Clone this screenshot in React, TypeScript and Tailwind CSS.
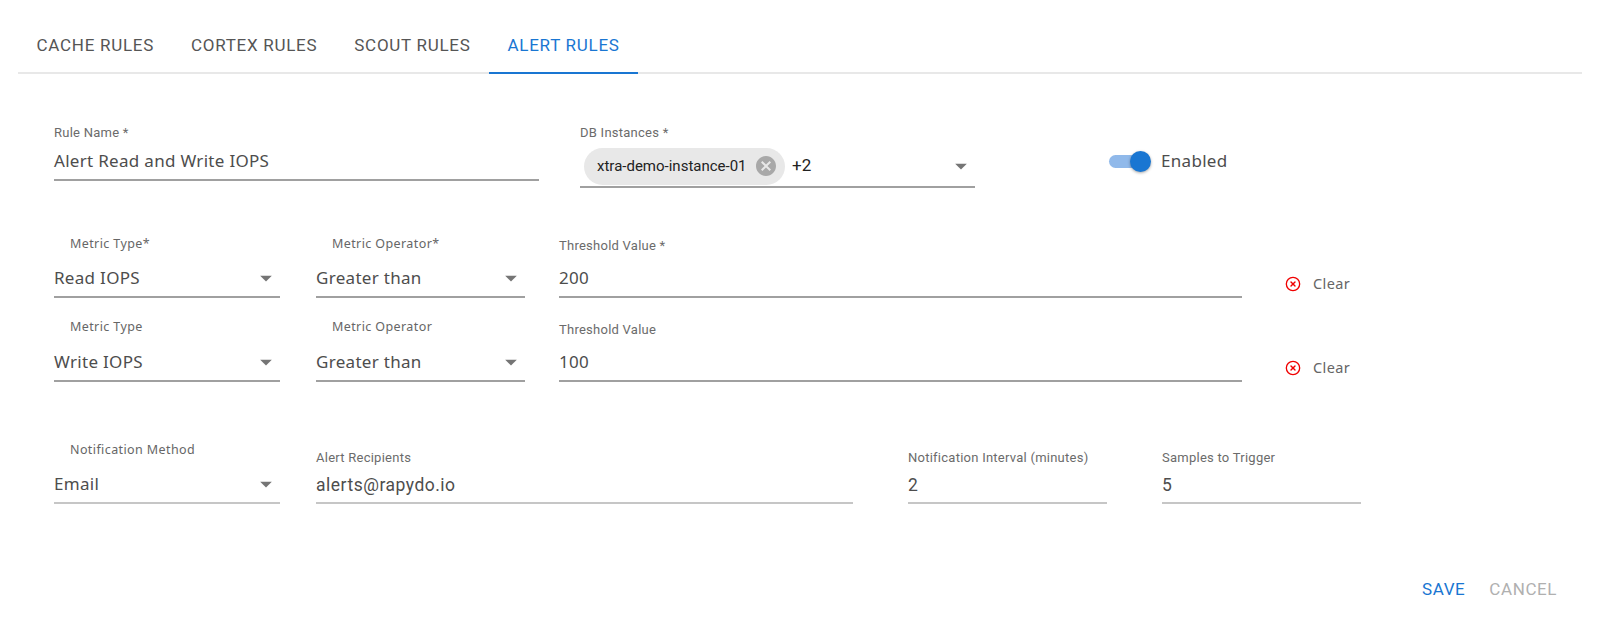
import { CircleX } from 'lucide-react';
import type { ReactNode } from 'react';

const tabs = ['CACHE RULES', 'CORTEX RULES', 'SCOUT RULES', 'ALERT RULES'];

function Arrow() {
  return (
    <svg viewBox="0 0 24 24" className="shrink-0 w-7 h-7 text-[#757575]" fill="currentColor">
      <path d="M7 10l5 5 5-5z" />
    </svg>
  );
}

interface FieldProps {
  label: string;
  width: string;
  labelClass: string;
  line?: string;
  select?: boolean;
  children: ReactNode;
}

function Field({ label, width, labelClass, line = 'border-[#a0a0a0]', select, children }: FieldProps) {
  return (
    <div className={`flex flex-col shrink-0 ${width}`}>
      <div className={`h-[14px] flex items-center whitespace-nowrap ${labelClass}`}>{label}</div>
      <div className={`h-[36px] flex items-center justify-between border-b-2 box-content ${line}`}>
        {children}
        {select && <Arrow />}
      </div>
    </div>
  );
}

const roboLabel = "font-['Roboto',sans-serif] text-[13px] tracking-[0.25px] text-[#6b6b6b]";
const fieldLabel = "font-['Noto_Sans',sans-serif] text-[12.5px] tracking-[0.4px] text-[#666666] pl-4";
const value = "font-['Noto_Sans',sans-serif] text-[17px] tracking-[0.3px] text-[#4d4d4d]";
const roboValue = "font-['Roboto',sans-serif] text-[17.5px] tracking-[0.5px] text-[#4d4d4d] mt-[2px]";

function ClearButton() {
  return (
    <div className="ml-[43px] mb-[2px] h-6 flex items-center gap-3 font-['Noto_Sans',sans-serif] text-[14.5px] tracking-[0.4px] text-[#666666]">
      <CircleX className="w-4 h-4 text-[#f00000]" strokeWidth={2} />
      Clear
    </div>
  );
}

export default function App() {
  return (
    <div className="w-[1600px] h-[637px] bg-white overflow-hidden">
      <div className="mx-[18px] w-[1564px] h-[74px] border-b-2 border-[#e8e8e8] flex items-end">
        {tabs.map((t) => (
          <div
            key={t}
            className={`h-[74px] -mb-[2px] px-[18.5px] pt-[35px] font-['Roboto',sans-serif] text-[17px] leading-5 tracking-[0.72px] border-b-2 box-border ${
              t === 'ALERT RULES' ? 'text-[#1976d2] border-[#1976d2]' : 'text-[#555555] border-transparent'
            }`}
          >
            {t}
          </div>
        ))}
      </div>

      <div className="pl-[54px] pt-[52px]">
        <div className="flex items-start">
          <Field label="Rule Name *" width="w-[485px]" labelClass={`${roboLabel} mb-[3px]`}>
            <span className={value}>Alert Read and Write IOPS</span>
          </Field>
          <div className="ml-[41px] w-[395px] flex flex-col shrink-0">
            <div className={`h-[14px] flex items-center mb-[6px] ${roboLabel}`}>DB Instances *</div>
            <div className="h-[40px] flex items-center border-b-2 border-[#a0a0a0] box-content">
              <div className="ml-1 h-[37px] w-[201px] rounded-full bg-[#e8e8e8] flex items-center justify-between pl-[13px] pr-[7px] font-['Roboto',sans-serif] text-[15px] text-[#222222]">
                xtra-demo-instance-01
                <svg viewBox="0 0 24 24" className="w-6 h-6 text-[#a8a8a8]" fill="currentColor">
                  <path d="M12 2C6.47 2 2 6.47 2 12s4.47 10 10 10 10-4.47 10-10S17.53 2 12 2zm5 13.59L15.59 17 12 13.41 8.41 17 7 15.59 10.59 12 7 8.41 8.41 7 12 10.59 15.59 7 17 8.41 13.41 12 17 15.59z" />
                </svg>
              </div>
              <span className="ml-[7px] font-['Roboto',sans-serif] text-[17px] text-[#222222]">+2</span>
              <div className="ml-auto flex">
                <Arrow />
              </div>
            </div>
          </div>
          <div className="ml-[134px] mt-[20px] h-[30px] flex items-center">
            <div className="relative w-[34px] h-[13px] rounded-full bg-[#90b9ea]">
              <div className="absolute -right-[8px] -top-[4px] w-[21px] h-[21px] rounded-full bg-[#1976d2] shadow-[0_1px_3px_rgba(0,0,0,0.35)]" />
            </div>
            <span className={`ml-[18px] ${value}`}>Enabled</span>
          </div>
        </div>

        <div className="flex items-end mt-[49px]">
          <Field label="Metric Type*" width="w-[226px]" labelClass={`${fieldLabel} mb-[9px]`} select>
            <span className={value}>Read IOPS</span>
          </Field>
          <div className="ml-9">
            <Field label="Metric Operator*" width="w-[209px]" labelClass={`${fieldLabel} mb-[9px]`} select>
              <span className={value}>Greater than</span>
            </Field>
          </div>
          <div className="ml-[34px]">
            <Field label="Threshold Value *" width="w-[683px]" labelClass={`${roboLabel} mb-[7px]`}>
              <span className={value}>200</span>
            </Field>
          </div>
          <ClearButton />
        </div>

        <div className="flex items-end mt-[22px]">
          <Field label="Metric Type" width="w-[226px]" labelClass={`${fieldLabel} mb-[10px]`} select>
            <span className={value}>Write IOPS</span>
          </Field>
          <div className="ml-9">
            <Field label="Metric Operator" width="w-[209px]" labelClass={`${fieldLabel} mb-[10px]`} select>
              <span className={value}>Greater than</span>
            </Field>
          </div>
          <div className="ml-[34px]">
            <Field label="Threshold Value" width="w-[683px]" labelClass={`${roboLabel} mb-[7px]`}>
              <span className={value}>100</span>
            </Field>
          </div>
          <ClearButton />
        </div>

        <div className="flex items-end mt-[61px]">
          <Field label="Notification Method" width="w-[226px]" labelClass={`${fieldLabel} mb-[9px]`} line="border-[#c6c6c6]" select>
            <span className={value}>Email</span>
          </Field>
          <div className="ml-9">
            <Field label="Alert Recipients" width="w-[537px]" labelClass={`${roboLabel} mb-px`} line="border-[#c6c6c6]">
              <span className={roboValue}>alerts@rapydo.io</span>
            </Field>
          </div>
          <div className="ml-[55px]">
            <Field label="Notification Interval (minutes)" width="w-[199px]" labelClass={`${roboLabel} mb-px`} line="border-[#c6c6c6]">
              <span className={roboValue}>2</span>
            </Field>
          </div>
          <div className="ml-[55px]">
            <Field label="Samples to Trigger" width="w-[199px]" labelClass={`${roboLabel} mb-px`} line="border-[#c6c6c6]">
              <span className={roboValue}>5</span>
            </Field>
          </div>
        </div>

        <div className="flex mt-[75px] ml-[1368px] gap-6 font-['Roboto',sans-serif] text-[17px] leading-5 tracking-[0.6px]">
          <span className="text-[#1976d2]">SAVE</span>
          <span className="text-[#b0b0b0]">CANCEL</span>
        </div>
      </div>
    </div>
  );
}
